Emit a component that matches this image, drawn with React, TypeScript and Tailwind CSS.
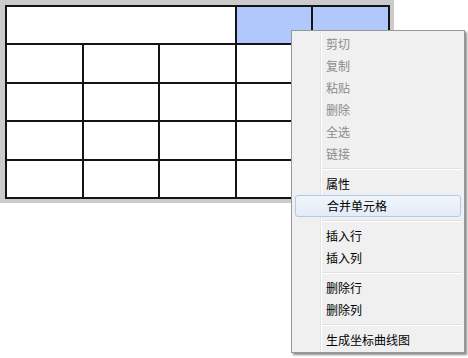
import React from "react";

type Item = { label: string; disabled?: boolean; active?: boolean } | "sep";

const items: Item[] = [
  { label: "剪切", disabled: true },
  { label: "复制", disabled: true },
  { label: "粘贴", disabled: true },
  { label: "删除", disabled: true },
  { label: "全选", disabled: true },
  { label: "链接", disabled: true },
  "sep",
  { label: "属性" },
  { label: "合并单元格", active: true },
  "sep",
  { label: "插入行" },
  { label: "插入列" },
  "sep",
  { label: "删除行" },
  { label: "删除列" },
  "sep",
  { label: "生成坐标曲线图" },
];

export default function App() {
  const cells: { span?: number; blue?: boolean }[] = [
    { span: 3 },
    { blue: true },
    { blue: true },
  ];
  for (let i = 0; i < 20; i++) cells.push({});

  return (
    <div
      className="relative w-[468px] h-[358px] bg-white overflow-hidden"
      style={{ fontFamily: '"Microsoft YaHei", "Noto Sans CJK SC", sans-serif' }}
    >
      <div className="w-[394px] h-[203px] bg-[#cbcbcb] pt-[5px] pl-[5px]">
        <div className="w-[385px] h-[194px] bg-[#141414] p-[2px] grid grid-cols-5 grid-rows-5 gap-[2px]">
          {cells.map((c, i) => (
            <div
              key={i}
              className={`${c.span === 3 ? "col-span-3" : ""} ${c.blue ? "bg-[#b1c8fd]" : "bg-white"}`}
            />
          ))}
        </div>
      </div>

      <div className="absolute left-[291px] top-[30px] w-[174px] h-[323px] bg-[#f0f0f0] border border-[#979797] shadow-[2px_2px_2px_rgba(0,0,0,0.45)] pt-[2px]">
        <div className="absolute left-[28px] top-0 bottom-0 w-[2px] border-l border-[#e2e3e3] border-r border-r-white" />
        {items.map((it, i) =>
          it === "sep" ? (
            <div key={i} className="h-[8px] relative">
              <div className="absolute left-[30px] right-[2px] top-[3px] h-[2px] border-t border-[#e0e0e0] border-b border-b-white" />
            </div>
          ) : (
            <div
              key={i}
              className={`relative h-[22px] flex items-center text-[12px] leading-none ${
                it.active
                  ? "mx-[3px] rounded-[3px] border border-[#aecaec] bg-gradient-to-b from-[#f1f6fc] to-[#e3ebf6] pl-[31px]"
                  : "pl-[34px]"
              } ${it.disabled ? "text-[#8b8b8b]" : "text-black"}`}
            >
              {it.label}
            </div>
          )
        )}
      </div>
    </div>
  );
}
